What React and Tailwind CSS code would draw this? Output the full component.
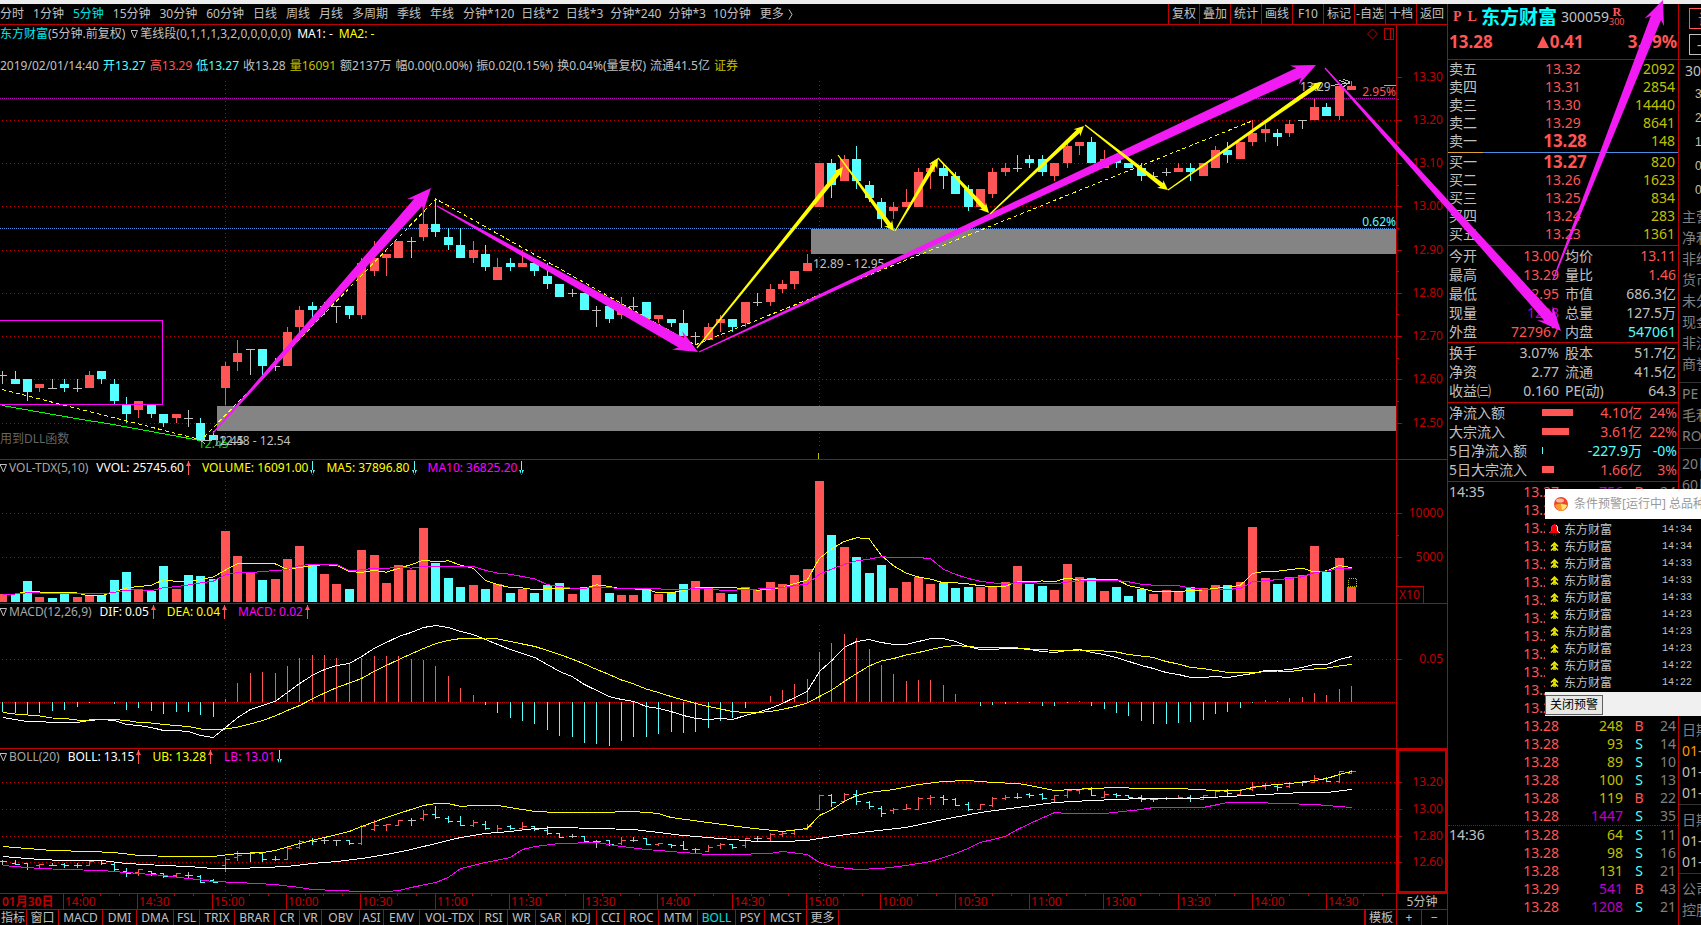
import clsx from "clsx";

const RED = "#ff5555";
const CYAN = "#55ffff";
const GREY = "#c0c0c0";
const LINE = "#c00000";

const X0 = 2.75;
const STEP = 12.375;
const barX = (i) => X0 + STEP * i;

// open, high, low, close (in cents)
const CANDLES = [
  [1261, 1262, 1259, 1261], [1260, 1262, 1259, 1259], [1260, 1260, 1255, 1257], [1258, 1259, 1257, 1259],
  [1258, 1260, 1258, 1258], [1259, 1260, 1257, 1258], [1258, 1260, 1257, 1258], [1258, 1262, 1258, 1261],
  [1262, 1262, 1259, 1260], [1259, 1260, 1254, 1255], [1254, 1256, 1250, 1252], [1253, 1255, 1251, 1255],
  [1254, 1254, 1251, 1252], [1252, 1252, 1249, 1250], [1251, 1252, 1250, 1252], [1251, 1253, 1249, 1251],
  [1250, 1251, 1246, 1246], [1247, 1248, 1246, 1246], [1258, 1264, 1254, 1263], [1264, 1269, 1262, 1266],
  [1267, 1267, 1261, 1267], [1267, 1267, 1261, 1263], [1263, 1265, 1262, 1263], [1263, 1272, 1263, 1271],
  [1272, 1277, 1271, 1276], [1277, 1278, 1274, 1276], [1277, 1278, 1275, 1277], [1277, 1277, 1273, 1277],
  [1277, 1277, 1274, 1275], [1275, 1288, 1274, 1287], [1285, 1292, 1284, 1288], [1288, 1289, 1284, 1289],
  [1288, 1292, 1288, 1292], [1292, 1293, 1288, 1292], [1293, 1299, 1292, 1296], [1296, 1302, 1293, 1294],
  [1293, 1295, 1290, 1291], [1291, 1295, 1288, 1288], [1288, 1292, 1287, 1290], [1289, 1291, 1285, 1286],
  [1283, 1288, 1283, 1286], [1287, 1288, 1285, 1286], [1286, 1290, 1286, 1287], [1287, 1287, 1284, 1285],
  [1284, 1287, 1281, 1282], [1282, 1282, 1279, 1279], [1280, 1281, 1279, 1280], [1280, 1280, 1276, 1276],
  [1276, 1277, 1272, 1276], [1277, 1277, 1273, 1274], [1275, 1279, 1274, 1277], [1277, 1279, 1276, 1277],
  [1278, 1278, 1274, 1274], [1274, 1275, 1273, 1275], [1274, 1274, 1272, 1273], [1273, 1276, 1270, 1270],
  [1270, 1271, 1268, 1270], [1269, 1273, 1269, 1272], [1273, 1275, 1271, 1274], [1274, 1274, 1271, 1272],
  [1273, 1278, 1272, 1278], [1278, 1280, 1277, 1278], [1278, 1282, 1277, 1281], [1281, 1283, 1280, 1282],
  [1282, 1285, 1281, 1285], [1285, 1289, 1285, 1287], [1300, 1310, 1300, 1310], [1310, 1311, 1302, 1305],
  [1306, 1312, 1306, 1311], [1311, 1314, 1304, 1306], [1305, 1306, 1301, 1302], [1301, 1302, 1295, 1297],
  [1299, 1301, 1297, 1300], [1300, 1304, 1300, 1301], [1300, 1309, 1300, 1308], [1308, 1310, 1304, 1309],
  [1309, 1310, 1304, 1307], [1307, 1308, 1303, 1303], [1304, 1305, 1299, 1300], [1300, 1304, 1300, 1304],
  [1303, 1309, 1302, 1308], [1308, 1310, 1307, 1309], [1309, 1312, 1308, 1309], [1311, 1312, 1309, 1310],
  [1311, 1312, 1307, 1308], [1307, 1310, 1306, 1310], [1310, 1315, 1309, 1314], [1314, 1315, 1312, 1315],
  [1315, 1316, 1310, 1310], [1309, 1313, 1309, 1311], [1311, 1312, 1309, 1310], [1310, 1310, 1309, 1309],
  [1309, 1310, 1306, 1307], [1307, 1308, 1306, 1307], [1308, 1309, 1307, 1308], [1308, 1310, 1308, 1309],
  [1309, 1310, 1306, 1308], [1307, 1310, 1307, 1310], [1309, 1314, 1309, 1313], [1313, 1315, 1310, 1312],
  [1311, 1315, 1311, 1315], [1315, 1320, 1314, 1317], [1317, 1319, 1315, 1318], [1317, 1318, 1314, 1316],
  [1317, 1320, 1316, 1319], [1320, 1320, 1318, 1320], [1320, 1325, 1320, 1323], [1323, 1324, 1321, 1321],
  [1321, 1328, 1320, 1328], [1327, 1329, 1327, 1328],
];

// bar heights, negative = falling bar
const VOLUMES = [
  8, -8, -21, 5, -4, -10, 5, 6, -7, -22, -30, 13, -11, -36, 13, -27, -26, -23, 71, 46, 29, -22, 23, 43, 56, -37, 28, 18,
  -13, 52, 47, 19, 37, 32, 74, -39, -24, -15, 17, -13, 18, -9, 13, -9, -17, -19, 8, -15, 27, -9, 7, 7, -14, 8, -10, -18,
  21, 15, 9, -8, 15, 12, 20, 18, 27, 33, 121, -67, 55, -45, -29, -37, 14, 20, 25, 18, -19, -14, -15, 15, 15, 20, 36, -18,
  -16, 12, 38, 25, -24, 11, -15, -6, -13, 8, 12, 11, -15, 14, 17, -17, 20, 75, 24, -18, 25, 27, 56, -30, 44, 15,
];

const HIST = [
  -10, -11, -13, -11, -9, -8, -5, -1, 0, -2, -8, -6, -9, -12, -10, -10, -13, -15, 3, 19, 29, 30, 29, 36, 44, 47, 47, 44,
  39, 44, 46, 46, 46, 43, 42, 36, 26, 14, 7, -3, -11, -16, -19, -22, -28, -34, -35, -41, -42, -44, -39, -35, -35, -32,
  -30, -31, -30, -26, -19, -16, -6, 0, 6, 12, 18, 23, 50, 59, 68, 64, 53, 37, 28, 21, 22, 22, 17, 8, 0, -4, -3, -2, -1,
  -1, -4, -4, -1, 1, -4, -7, -11, -14, -19, -22, -22, -21, -20, -18, -12, -10, -6, -1, 2, 1, 4, 5, 9, 7, 13, 16,
];

const DIF = [
  -15, -17, -19, -19, -20, -20, -20, -18, -17, -18, -22, -23, -25, -28, -28, -29, -33, -35, -25, -15, -7, -3, 1, 10, 19,
  27, 33, 37, 39, 46, 54, 60, 66, 70, 75, 77, 75, 71, 68, 63, 58, 53, 49, 45, 38, 31, 26, 18, 12, 6, 3, 1, -4, -6, -9,
  -13, -16, -17, -16, -17, -13, -10, -6, -1, 5, 11, 31, 42, 55, 61, 63, 60, 58, 58, 61, 64, 64, 61, 56, 53, 53, 54, 54,
  53, 51, 50, 52, 53, 50, 48, 45, 41, 37, 34, 30, 28, 25, 25, 26, 25, 27, 29, 32, 32, 33, 35, 38, 38, 43, 46,
];

// bar index, y
const UB = [
  [0, 81], [2, 83], [4, 85], [7, 86], [9, 87], [11, 90], [14, 91], [17, 91], [19, 88], [21, 87], [22, 85], [24, 78],
  [25, 75], [27, 69], [28, 66], [29, 61], [31, 52], [33, 44], [34, 40], [35, 38], [36, 38], [37, 41], [38, 40], [40, 40],
  [42, 44], [43, 46], [45, 47], [48, 47], [51, 46], [53, 48], [54, 52], [57, 57], [60, 62], [63, 66], [65, 63], [66, 50],
  [67, 44], [68, 36], [69, 30], [70, 27], [72, 24], [74, 19], [76, 16], [78, 15], [80, 17], [82, 18], [83, 20], [85, 25],
  [88, 23], [90, 22], [92, 23], [95, 23], [98, 25], [100, 25], [101, 22], [102, 20], [104, 18], [106, 15], [107, 13],
  [108, 9], [109, 6],
];
const MID = [
  [0, 91], [3, 94], [5, 95], [8, 95], [10, 98], [13, 100], [15, 101], [17, 103], [19, 103], [21, 102], [23, 101],
  [25, 98], [27, 96], [29, 93], [31, 89], [33, 84], [35, 78], [37, 72], [39, 68], [41, 66], [43, 63], [45, 62], [48, 63],
  [51, 64], [53, 67], [55, 70], [57, 72], [59, 74], [61, 76], [63, 76], [65, 75], [67, 71], [70, 66], [73, 62], [76, 54],
  [79, 47], [82, 42], [85, 37], [88, 35], [92, 33], [96, 33], [99, 31], [102, 29], [105, 27], [107, 27], [109, 24],
];
const LB = [
  [0, 100], [3, 103], [5, 104], [8, 105], [11, 108], [13, 110], [15, 113], [17, 116], [19, 117], [22, 119], [24, 122],
  [25, 124], [27, 125], [29, 126], [31, 126], [32, 125], [33, 122], [35, 117], [36, 112], [37, 103], [39, 97], [41, 92],
  [42, 84], [43, 81], [45, 78], [48, 77], [50, 81], [52, 84], [55, 87], [57, 89], [59, 89], [62, 88], [63, 86], [65, 89],
  [66, 97], [67, 101], [69, 104], [71, 103], [73, 100], [75, 96], [77, 88], [78, 83], [79, 77], [81, 71], [82, 64],
  [83, 58], [85, 47], [86, 48], [89, 48], [92, 44], [93, 42], [97, 42], [99, 37], [101, 37], [106, 39], [109, 42],
];

const PERIODS = [
  "分时", "1分钟", "5分钟", "15分钟", "30分钟", "60分钟", "日线", "周线", "月线", "多周期", "季线", "年线",
  "分钟*120", "日线*2", "日线*3", "分钟*240", "分钟*3", "10分钟",
];
const TOOLS = ["复权", "叠加", "统计", "画线", "F10", "标记", "-自选", "十档", "返回"];
const INDICATORS = [
  "指标", "窗口", "MACD", "DMI", "DMA", "FSL", "TRIX", "BRAR", "CR", "VR", "OBV", "ASI", "EMV", "VOL-TDX", "RSI", "WR",
  "SAR", "KDJ", "CCI", "ROC", "MTM", "BOLL", "PSY", "MCST", "更多",
];
const TIMES = [
  "14:00", "14:30", "15:00", "10:00", "10:30", "11:00", "11:30", "13:30", "14:00", "14:30", "15:00", "10:00", "10:30",
  "11:00", "13:00", "13:30", "14:00", "14:30",
];

const SELL = [["卖五", "13.32", "2092"], ["卖四", "13.31", "2854"], ["卖三", "13.30", "14440"], ["卖二", "13.29", "8641"], ["卖一", "13.28", "148"]];
const BUY = [["买一", "13.27", "820"], ["买二", "13.26", "1623"], ["买三", "13.25", "834"], ["买四", "13.24", "283"], ["买五", "13.23", "1361"]];

const STATS = [
  ["今开", "13.00", "r", "均价", "13.11", "r"],
  ["最高", "13.29", "r", "量比", "1.46", "r"],
  ["最低", "12.95", "r", "市值", "686.3亿", "w"],
  ["现量", "1208", "m", "总量", "127.5万", "w"],
  ["外盘", "727967", "r", "内盘", "547061", "c"],
];
const STATS2 = [
  ["换手", "3.07%", "w", "股本", "51.7亿", "w"],
  ["净资", "2.77", "w", "流通", "41.5亿", "w"],
  ["收益㈢", "0.160", "w", "PE(动)", "64.3", "w"],
];
const FLOWS = [
  ["净流入额", 31, "4.10亿", "24%", "r"],
  ["大宗流入", 27, "3.61亿", "22%", "r"],
  ["5日净流入额", 1, "-227.9万", "-0%", "c"],
  ["5日大宗流入", 12, "1.66亿", "3%", "r"],
];

const TICKS = [
  ["14:35", "13.27", 756, "B", 24], ["", "13.28", 120, "B", 12], ["", "13.28", 86, "S", 9], ["", "13.28", 210, "B", 17],
  ["", "13.28", 64, "S", 8], ["", "13.28", 95, "B", 11], ["", "13.28", 143, "S", 15], ["", "13.28", 77, "B", 10],
  ["", "13.28", 180, "S", 19], ["", "13.28", 52, "B", 7], ["", "13.28", 134, "S", 13], ["", "13.28", 99, "B", 12],
  ["", "13.28", 161, "S", 18], ["", "13.28", 248, "B", 24], ["", "13.28", 93, "S", 14], ["", "13.28", 89, "S", 10],
  ["", "13.28", 100, "S", 13], ["", "13.28", 119, "B", 22], ["", "13.28", 1447, "S", 35], ["14:36", "13.28", 64, "S", 11],
  ["", "13.28", 98, "S", 16], ["", "13.28", 131, "S", 21], ["", "13.29", 541, "B", 43], ["", "13.28", 1208, "S", 21],
];

const ALERTS = ["14:34", "14:34", "14:33", "14:33", "14:33", "14:23", "14:23", "14:23", "14:22", "14:22"];

const TONE = {
  r: "text-[#ff5555]",
  c: "text-[#55ffff]",
  w: "text-[#c0c0c0]",
  m: "text-[#c000c0]",
};

const tone = ([o, , , c]) => (c > o ? RED : c < o ? CYAN : GREY);

function average(list, n) {
  return list.map((_, i) => {
    let sum = 0;
    for (let k = i - n + 1; k <= i; k++) sum += k < 0 ? 8 : Math.abs(list[k]);
    return sum / n;
  });
}

function Curve({ points, color, dash }) {
  return <polyline points={points.map((p) => p.join(",")).join(" ")} fill="none" stroke={color} strokeDasharray={dash} />;
}

function Grid({ rows, top, height }) {
  return (
    <g stroke={LINE} strokeDasharray="1 3">
      {rows.map((y) => (
        <line key={y} x1="2" x2="3000" y1={y} y2={y} />
      ))}
      {[18, 66].map((i) => (
        <line key={i} x1={barX(i)} x2={barX(i)} y1={top} y2={height} />
      ))}
    </g>
  );
}

function PriceChart() {
  const y = (p) => 131.5 + (1300 - p) * 4.32;
  return (
    <svg className="block h-[384px] w-full" shapeRendering="crispEdges">
      <Grid rows={[45.5, 88.5, 131.5, 175.5, 218.5, 261.5, 304.5, 348.5]} top={6} height={372} />
      <line x1="0" x2="3000" y1="23.5" y2="23.5" stroke="#c000c0" strokeDasharray="1 1" />
      <line x1="0" x2="3000" y1="153.5" y2="153.5" stroke="#4a90e2" strokeDasharray="1 1" />
      <rect x="217" y="331" width="3000" height="25" fill="#848484" />
      <rect x="811" y="154" width="3000" height="25" fill="#848484" />
      {CANDLES.map((c, i) => {
        const x = Math.floor(barX(i));
        const top = Math.round(y(Math.max(c[0], c[3])));
        const bottom = Math.round(y(Math.min(c[0], c[3])));
        const high = Math.round(y(c[1]));
        return (
          <g key={i} fill={tone(c)}>
            <rect x={x} y={high} width="1" height={Math.round(y(c[2])) - high} />
            <rect x={x - 4} y={top} width="9" height={Math.max(1, bottom - top)} />
          </g>
        );
      })}
      <polyline points="-5,245.5 162.5,245.5 162.5,329.5 -5,329.5" fill="none" stroke="#ff00ff" />
      <Curve points={[[2, 330.5], [76, 343.5], [116, 350], [200, 365.5]]} color="#00ff00" />
      <Curve points={[[2, 314.5], [202, 365], [207, 359], [436, 124], [695, 270], [1252, 46]]} color="#ffff00" dash="4 3" />
      <text x="198" y="373" fontSize="12" fill="#00e000" clipPath="inset(6px 0 0 0)">12.45</text>
      <path d="M212 365.5H201M205 362L201 365.5L205 369" fill="none" stroke={GREY} />
      <text x="213" y="370" fontSize="12" fill={GREY}>12.45</text>
      <text x="219" y="370" fontSize="12" fill={GREY}>12.48 - 12.54</text>
      <text x="813" y="193" fontSize="12" fill={GREY}>12.89 - 12.95</text>
      <text x="0" y="368" fontSize="12" fill="#666666">用到DLL函数</text>
      <text x="1300" y="16" fontSize="12" fill={GREY}>13.29</text>
      <path d="M1331 10.5L1350 8M1343 4L1350 7L1343 12M1339 5L1346 8" fill="none" stroke={GREY} />
      <line x1="818.5" x2="818.5" y1="378" y2="384" stroke="#c0c000" />
    </svg>
  );
}

function VolumeChart() {
  const line = (n) => average(VOLUMES, n).map((v, i) => [barX(i), 126 - v]);
  return (
    <svg className="block h-[127px] w-full" shapeRendering="crispEdges">
      <Grid rows={[37.5, 81.5]} top={5} height={127} />
      {VOLUMES.map((v, i) => (
        <rect key={i} x={Math.floor(barX(i)) - 4} y={126 - Math.abs(v)} width="9" height={Math.abs(v)} fill={v > 0 ? RED : CYAN} />
      ))}
      <rect x="1348.5" y="102.5" width="8" height="8" fill="none" stroke="#c0c000" strokeDasharray="1 1" />
      <Curve points={line(5)} color="#ffff00" />
      <Curve points={line(10)} color="#ff00ff" />
    </svg>
  );
}

function MacdChart() {
  const zero = 82.5;
  return (
    <svg className="block h-32 w-full" shapeRendering="crispEdges">
      <Grid rows={[39.5]} top={5} height={126} />
      <line x1="0" x2="3000" y1={zero} y2={zero} stroke={LINE} strokeDasharray="1 1" />
      {HIST.map((v, i) => (
        <rect key={i} x={Math.floor(barX(i))} y={v > 0 ? 82 - v : 82} width="1" height={Math.abs(v)} fill={v > 0 ? RED : CYAN} />
      ))}
      <Curve points={DIF.map((v, i) => [barX(i), zero - v])} color="#ffffff" />
      <Curve points={DIF.map((v, i) => [barX(i), zero - v + HIST[i] / 2])} color="#ffff00" />
    </svg>
  );
}

function BollChart() {
  const y = (p) => Math.round(17 + (1320 - p) * 1.345) + 0.5;
  const at = (list) => list.map(([i, v]) => [barX(i), v + 0.5]);
  return (
    <svg className="block h-32 w-full" shapeRendering="crispEdges">
      <Grid rows={[17.5, 44.5, 71.5, 97.5]} top={5} height={126} />
      {CANDLES.map((c, i) => {
        const x = Math.floor(barX(i)) + 0.5;
        return (
          <path
            key={i}
            d={`M${x} ${y(c[1]) - 0.5}V${y(c[2]) + 0.5}M${x - 4} ${y(c[0])}H${x}M${x} ${y(c[3])}H${x + 4}`}
            fill="none"
            stroke={tone(c)}
          />
        );
      })}
      <Curve points={at(UB)} color="#ffff00" />
      <Curve points={at(MID)} color="#ffffff" />
      <Curve points={at(LB)} color="#ff00ff" />
    </svg>
  );
}

// y-axis: labelled ticks plus short ones half way
function Scale({ marks, minor = [], className }) {
  return (
    <svg className={clsx("block w-[50px] shrink-0", className)} fill={LINE}>
      {marks.map(([y, label]) => (
        <g key={label}>
          <rect x="0" y={y} width="5" height="1" />
          <text x="46" y={y + 4} fontSize="12" textAnchor="end">{label}</text>
        </g>
      ))}
      {minor.map((y) => (
        <rect key={y} x="0" y={y} width="2" height="1" />
      ))}
    </svg>
  );
}

function Flag({ up }) {
  return (
    <svg className="ml-[2px] h-[14px] w-[5px] shrink-0" viewBox="0 0 5 14" fill={up ? RED : CYAN}>
      <path d={up ? "M2 0H3V14H2ZM2.5 0L5 5H0Z" : "M2 0H3V14H2ZM2.5 14L5 9H0Z"} />
    </svg>
  );
}

function Fold() {
  return (
    <svg className="mr-[2px] h-[9px] w-[7px] shrink-0" viewBox="0 0 7 9" fill="none" stroke={GREY}>
      <path d="M0 .5H6.5L3.5 8Z" />
    </svg>
  );
}

function PanelTitle({ name, items }) {
  return (
    <div className="flex h-4 items-center whitespace-nowrap text-xs leading-4">
      <Fold />
      <span className="mr-2 text-[#a8a8a8]">{name}</span>
      {items.map(([text, color, up]) => (
        <span key={text} className={clsx("mr-[11px] flex items-center", color)}>
          {text}
          <Flag up={up} />
        </span>
      ))}
    </div>
  );
}

function Panel({ children, scale }) {
  return (
    <section className="flex border-b border-[#c00000]">
      <div className="min-w-0 flex-1 overflow-hidden border-r border-[#c00000]">{children}</div>
      {scale}
    </section>
  );
}

function TopBar() {
  return (
    <nav className="flex h-[21px] justify-between overflow-hidden border-b border-[#c00000] text-xs text-[#c0c0c0]">
      <div className="flex items-center gap-x-[9px] whitespace-nowrap">
        {PERIODS.map((p) => (
          <button key={p} className={clsx(p === "5分钟" && "text-[#00e0e0]", p.includes("*") && "-mr-[2px]")}>{p}</button>
        ))}
        <button className="flex items-center gap-1">
          更多
          <svg className="h-[11px] w-[5px]" viewBox="0 0 5 11" fill="none" stroke={GREY}>
            <path d="M1 .5L4 5.5L1 10.5" />
          </svg>
        </button>
      </div>
      <div className="flex">
        {TOOLS.map((t) => (
          <button key={t} className="w-[31px] whitespace-nowrap border-l border-[#c00000] text-center">{t}</button>
        ))}
      </div>
    </nav>
  );
}

function PriceHeader() {
  return (
    <header className="relative whitespace-nowrap text-xs leading-[18px] text-[#c0c0c0]">
      <div className="flex items-center">
        <span className="text-[#00e8e8]">东方财富</span>
        <span className="mr-[6px]">(5分钟.前复权)</span>
        <Fold />
        <span className="mr-[6px]">笔线段(0,1,1,1,3,2,0,0,0,0,0)</span>
        <span className="mr-[6px] text-white">MA1: -</span>
        <span className="text-[#ffff00]">MA2: -</span>
        <svg className="ml-auto mr-[2px] h-3 w-7" viewBox="0 0 28 12" fill="none" stroke={LINE}>
          <path d="M6.5 1L11.5 6L6.5 11L1.5 6ZM18.5 .5H27.5V11.5H18.5ZM24.5 .5V11.5" />
        </svg>
      </div>
      <div className="mt-[14px] flex gap-1">
        <span>2019/02/01/14:40</span>
        <span className="text-[#55ffff]">开13.27</span>
        <span className="text-[#ff5555]">高13.29</span>
        <span className="text-[#55ffff]">低13.27</span>
        <span>收13.28</span>
        <span className="text-[#c0c000]">量16091</span>
        <span>额2137万</span>
        <span>幅0.00(0.00%)</span>
        <span>振0.02(0.15%)</span>
        <span>换0.04%(量复权)</span>
        <span>流通41.5亿</span>
        <span className="text-[#c0c000]">证券</span>
      </div>
      {/* change labels sit on the two reference lines */}
      <span className="absolute right-0 top-[58px] text-[#ff5555]">2.95%</span>
      <span className="absolute right-0 top-[60px] h-px w-3 bg-[#c0c000]" />
      <span className="absolute right-0 top-[188px] text-[#55ffff]">0.62%</span>
    </header>
  );
}

function TimeAxis() {
  return (
    <div className="flex h-4 border-b border-[#c00000]">
      <svg className="h-[15px] min-w-0 flex-1" fill={LINE}>
        <text x="2" y="12" fontSize="12" fontWeight="600">01月30日</text>
        {TIMES.map((t, i) => {
          const x = Math.round(63 + i * 74.3);
          return (
            <g key={i}>
              <rect x={x} y="0" width="1" height="15" />
              <text x={x + 2} y="12" fontSize="12">{t}</text>
              {[19, 37, 56].map((d) => (
                <rect key={d} x={x + d} y="0" width="1" height="2" />
              ))}
            </g>
          );
        })}
      </svg>
      <div className="w-[51px] border-l border-[#c00000] text-center text-xs leading-[15px] text-[#c0c0c0]">5分钟</div>
    </div>
  );
}

function IndicatorTabs() {
  return (
    <nav className="flex h-[15px] justify-between overflow-hidden whitespace-nowrap text-xs leading-[15px] text-[#c0c0c0]">
      <div className="grid grid-cols-[27px_32px_44px_34px_37px_26px_35px_40px_25px_22px_38px_24px_36px_60px_28px_28px_30px_31px_28px_34px_39px_38px_29px_42px_32px]">
        {INDICATORS.map((n) => (
          <button
            key={n}
            className={clsx("flex justify-center border-r border-[#c00000]", n === "BOLL" && "text-[#00e0e0]")}
          >
            {n}
          </button>
        ))}
      </div>
      <div className="flex">
        <button className="border-l-2 border-[#c00000] px-[3px]">模板</button>
        <button className="w-[25px] border-l border-[#c00000]">+</button>
        <button className="w-[26px] border-l border-[#c00000]">−</button>
      </div>
    </nav>
  );
}

function Book({ rows, bold, className }) {
  return (
    <table className={clsx("w-full table-fixed", className)}>
      <tbody>
        {rows.map(([side, price, lots], i) => (
          <tr key={side} className="h-[18px]">
            <th className="w-[60px] pl-px text-left font-normal">{side}</th>
            <td className={clsx("text-center text-[#ff5555]", i === bold && "pl-1 text-[17px] font-bold")}>{price}</td>
            <td className="w-[60px] pr-[3px] text-right text-[#c0c000]">{lots}</td>
          </tr>
        ))}
      </tbody>
    </table>
  );
}

function Stats({ rows }) {
  return (
    <table className="mb-px w-full table-fixed">
      <tbody>
        {rows.map(([a, av, at, b, bv, bt]) => (
          <tr key={a} className="h-[19px]">
            <th className="w-12 whitespace-nowrap pl-px text-left font-normal">{a}</th>
            <td className={clsx("w-[63px] text-right", TONE[at])}>{av}</td>
            <th className="w-12 whitespace-nowrap pl-[6px] text-left font-normal">{b}</th>
            <td className={clsx("pr-[2px] text-right", TONE[bt])}>{bv}</td>
          </tr>
        ))}
      </tbody>
    </table>
  );
}

function QuotePanel() {
  return (
    <aside className="w-[232px] shrink-0 border-x border-[#c00000] text-sm leading-[18px] text-[#c0c0c0]">
      <header className="border-b border-[#c00000] pb-1 text-[#ff5555]">
        <div className="flex h-[25px] items-center whitespace-nowrap pl-[5px]">
          <span className="mr-1 flex gap-[6px] font-['Liberation_Serif',serif] text-sm font-bold">
            <span>P</span>
            <span>L</span>
          </span>
          <h1 className="mr-1 text-[19px] font-semibold text-[#00ffff]">东方财富</h1>
          <span className="text-[#c0c0c0]">300059</span>
          <span className="flex flex-col items-center text-[9px] leading-[9px]">
            <b className="font-['Liberation_Serif',serif] text-xs leading-[10px]">R</b>
            300
          </span>
        </div>
        <div className="flex h-[26px] items-center justify-between px-px text-[17px] font-bold">
          <span>13.28</span>
          <span className="flex items-center gap-px">
            <svg className="h-3 w-3" viewBox="0 0 12 12" fill={RED}><path d="M6 0L12 12H0Z" /></svg>
            0.41
          </span>
          <span>3.19%</span>
        </div>
      </header>
      <Book rows={SELL} bold={4} className="mb-[2px]" />
      <div className="h-px bg-linear-to-r from-[#e0a030] from-15% to-[#4a90e2] to-15%" />
      <Book rows={BUY} bold={0} className="mb-[2px]" />
      <div className="border-t border-[#c00000]"><Stats rows={STATS} /></div>
      <div className="border-t border-[#c00000] pb-px"><Stats rows={STATS2} /></div>
      <table className="w-full table-fixed border-separate border-spacing-0 border-y border-[#c00000] pb-[2px]">
        <tbody>
          {FLOWS.map(([name, w, sum, pct, t]) => (
            <tr key={name} className="h-[19px]">
              <th className="w-[94px] whitespace-nowrap pl-px text-left font-normal">{name}</th>
              <td className="w-8">
                <div className={clsx("h-[7px]", t === "r" ? "bg-[#ff5555]" : "bg-[#55ffff]")} style={{ width: w }} />
              </td>
              <td className={clsx("whitespace-nowrap text-right", TONE[t])}>{sum}</td>
              <td className={clsx("w-9 pr-px text-right", TONE[t])}>{pct}</td>
            </tr>
          ))}
        </tbody>
      </table>
      <table className="mt-px w-full table-fixed">
        <tbody>
          {TICKS.map(([time, price, lots, side, n], i) => (
            <tr key={i} className={clsx("h-[18px]", i === 19 && "border-t border-dotted border-[#c00000]")}>
              <td className="w-12 pl-px">{time}</td>
              <td className="w-[63px] text-right text-[#ff5555]">{price}</td>
              <td className={clsx("w-16 text-right", lots > 500 ? "text-[#c000c0]" : "text-[#c0c000]")}>{lots}</td>
              <td className={clsx("w-8 text-center", side === "B" ? "text-[#ff5555]" : "text-[#55ffff]")}>{side}</td>
              <td className="pr-[2px] text-right text-[#808080]">{n}</td>
            </tr>
          ))}
        </tbody>
      </table>
    </aside>
  );
}

function Side({ items, className }) {
  return (
    <ul className={clsx("pl-[3px] leading-[21px]", className)}>
      {items.map((t) => (
        <li key={t} className={t.startsWith("01") ? "text-[#c0c0c0]" : undefined}>{t}</li>
      ))}
    </ul>
  );
}

function InfoPanel() {
  return (
    <aside className="w-[22px] shrink-0 overflow-hidden whitespace-nowrap text-sm text-[#808080]">
      <div className="flex h-14 flex-col gap-[5px] border-b border-[#c00000] pl-[10px] pt-1">
        <button className="h-[21px] w-16 border border-[#ff5555] pl-2 text-left leading-4 text-[#ff5555]">说明</button>
        <button className="h-[21px] w-16 border border-[#c0c0c0] pl-[7px] text-left leading-4 text-[#c0c0c0]">-</button>
      </div>
      <div className="pl-[6px] leading-[22px] text-[#c0c0c0]">300059</div>
      <ul className="mb-1 pl-4 font-['Liberation_Sans',sans-serif] text-xs leading-6 text-[#c0c0c0]">
        {["3.0", "2.0", "1.0", "0.5", "0.0"].map((v) => <li key={v}>{v}</li>)}
      </ul>
      <Side items={["主营", "净利", "非经", "货币", "未分", "现金", "非流", "商誉"]} />
      <Side className="mt-2 border-t border-[#333333]" items={["PE", "毛利", "ROE"]} />
      <Side className="mt-[2px] border-t border-[#333333] pt-1" items={["20日", "60日"]} />
      <Side className="mt-56" items={["日期"]} />
      <div className="pl-[3px] leading-[21px] text-[#ff9900]">01-31</div>
      <Side items={["01-30", "01-29"]} />
      <Side className="mt-px border-t border-[#333333] pt-1" items={["日期", "01-31", "01-30"]} />
      <Side className="mt-px border-t border-[#333333] pt-1" items={["公司", "控股"]} />
    </aside>
  );
}

function AlertWindow() {
  return (
    <div className="absolute right-0 top-[489px] w-[156px] overflow-hidden whitespace-nowrap text-xs">
      <div className="flex h-[30px] items-center bg-white pl-[9px] text-[#999999]">
        <svg className="mr-[6px] h-[14px] w-[14px] shrink-0" viewBox="0 0 14 14">
          <circle cx="7" cy="7" r="7" fill="#e8482c" />
          <path d="M1 8Q7 5 13 8Q12 14 7 14Q2 13 1 8Z" fill="#f79a2a" />
          <path d="M7 7L13 8Q12 12 8 13Z" fill="#ffe27a" />
          <ellipse cx="6" cy="3.5" rx="4" ry="2" fill="#ffb9a0" />
        </svg>
        条件预警[运行中] 总品种
      </div>
      <ul className="bg-black pb-px pt-[2px] text-[#c0c0c0]">
        {ALERTS.map((t, i) => (
          <li key={i} className="flex h-[17px] items-center pl-1 pr-[9px]">
            {i === 0 ? (
              <svg className="h-3 w-[11px]" viewBox="0 0 11 12">
                <path d="M5 0H6L8 2V7L11 9H0L3 7V2Z" fill="#ff0000" />
                <path d="M4 1L2.5 3V7L0 9" fill="none" stroke="#ff00ff" />
                <path d="M7 1L8.5 3V7L11 9" fill="none" stroke="#ffffff" />
                <path d="M4 11H5M6 11H7" stroke="#ff0000" />
              </svg>
            ) : (
              <svg className="h-[9px] w-[11px]" viewBox="0 0 11 9" fill="none" stroke="#e8e800" strokeWidth="1.5">
                <path d="M2 4.5L5.5 1L9 4.5M2 8.5L5.5 5L9 8.5M4 4H7M4 8H7" />
              </svg>
            )}
            <span className="ml-1">东方财富</span>
            <time className="ml-auto font-['Liberation_Mono',monospace] text-[10px]">{t}</time>
          </li>
        ))}
      </ul>
      <div className="flex h-6 items-center bg-[#f0f0f0] pt-px">
        <button className="h-5 border border-[#606060] bg-[#e8e8e4] px-1 leading-[18px] text-black">关闭预警</button>
      </div>
    </div>
  );
}

// hand-drawn arrows widen from the tail towards the head
function TaperArrow({ from, to, width, head, half, color }) {
  const [x1, y1] = from;
  const [x2, y2] = to;
  const len = Math.hypot(x2 - x1, y2 - y1);
  const ux = (x2 - x1) / len;
  const uy = (y2 - y1) / len;
  const at = (back, side) => `${x2 - ux * back - uy * side},${y2 - uy * back + ux * side}`;
  const neck = head * 0.8;
  const pts = [
    at(len, 0.6), at(neck, width / 2), at(head, half), at(0, 0), at(head, -half), at(neck, -width / 2), at(len, -0.6),
  ];
  return <polygon points={pts.join(" ")} fill={color} />;
}

const TRENDS = [
  [[213, 433], [431, 188]],
  [[437, 206], [698, 352]],
  [[699, 352], [1316, 65]],
  [[1325, 68], [1561, 331]],
  [[1553, 280], [1663, 0]],
];
const SWINGS = [
  [[697, 348], [843, 167]],
  [[838, 155], [894, 231]],
  [[895, 231], [938, 158]],
  [[938, 158], [989, 213]],
  [[990, 214], [1084, 126]],
  [[1085, 125], [1168, 190]],
  [[1168, 190], [1322, 82]],
];

function Drawings() {
  return (
    <svg className="pointer-events-none absolute left-0 top-0 h-full w-full" aria-hidden="true">
      {TRENDS.map(([a, b], i) => (
        <TaperArrow key={i} from={a} to={b} width={11} head={24} half={10.5} color="#f31bf3" />
      ))}
      {SWINGS.map(([a, b], i) => (
        <TaperArrow key={i} from={a} to={b} width={4.5} head={10} half={5} color="#ffff00" />
      ))}
    </svg>
  );
}

export default function App() {
  return (
    <div className="relative min-h-screen overflow-hidden bg-black font-['Noto_Sans','Noto_Sans_CJK_SC',sans-serif]">
      <div className="h-1 bg-[#ececec]" />
      <div className="flex">
        <main className="min-w-0 flex-1">
          <TopBar />
          <Panel
            scale={
              <Scale
                className="h-[434px]"
                marks={[[52, "13.30"], [95, "13.20"], [138, "13.10"], [181, "13.00"], [225, "12.90"], [268, "12.80"], [311, "12.70"], [354, "12.60"], [398, "12.50"]]}
                minor={[74, 117, 160, 203, 246, 289, 333, 376]}
              />
            }
          >
            <PriceHeader />
            <PriceChart />
          </Panel>
          <Panel
            scale={
              <div className="flex w-[50px] flex-col">
                <Scale className="h-[126px]" marks={[[53, "10000"], [97, "5000"]]} minor={[75]} />
                <span className="h-[17px] w-[27px] border-r border-t border-[#c00000] pl-[2px] text-xs leading-4 text-[#c00000]">X10</span>
              </div>
            }
          >
            <PanelTitle
              name="VOL-TDX(5,10)"
              items={[
                ["VVOL: 25745.60", "text-white", true],
                ["VOLUME: 16091.00", "text-[#ffff00]", false],
                ["MA5: 37896.80", "text-[#ffff00]", false],
                ["MA10: 36825.20", "text-[#ff00ff]", false],
              ]}
            />
            <VolumeChart />
          </Panel>
          <Panel scale={<Scale className="h-36" marks={[[55, "0.05"]]} />}>
            <PanelTitle
              name="MACD(12,26,9)"
              items={[
                ["DIF: 0.05", "text-white", true],
                ["DEA: 0.04", "text-[#ffff00]", true],
                ["MACD: 0.02", "text-[#ff00ff]", true],
              ]}
            />
            <MacdChart />
          </Panel>
          <Panel
            scale={
              <Scale
                className="h-36 outline-2 -outline-offset-2 outline-[#c00000]"
                marks={[[33, "13.20"], [60, "13.00"], [87, "12.80"], [113, "12.60"]]}
                minor={[46, 73, 100, 126]}
              />
            }
          >
            <PanelTitle
              name="BOLL(20)"
              items={[
                ["BOLL: 13.15", "text-white", true],
                ["UB: 13.28", "text-[#ffff00]", true],
                ["LB: 13.01", "text-[#ff00ff]", false],
              ]}
            />
            <BollChart />
          </Panel>
          <TimeAxis />
          <IndicatorTabs />
        </main>
        <QuotePanel />
        <InfoPanel />
      </div>
      <AlertWindow />
      <Drawings />
    </div>
  );
}
